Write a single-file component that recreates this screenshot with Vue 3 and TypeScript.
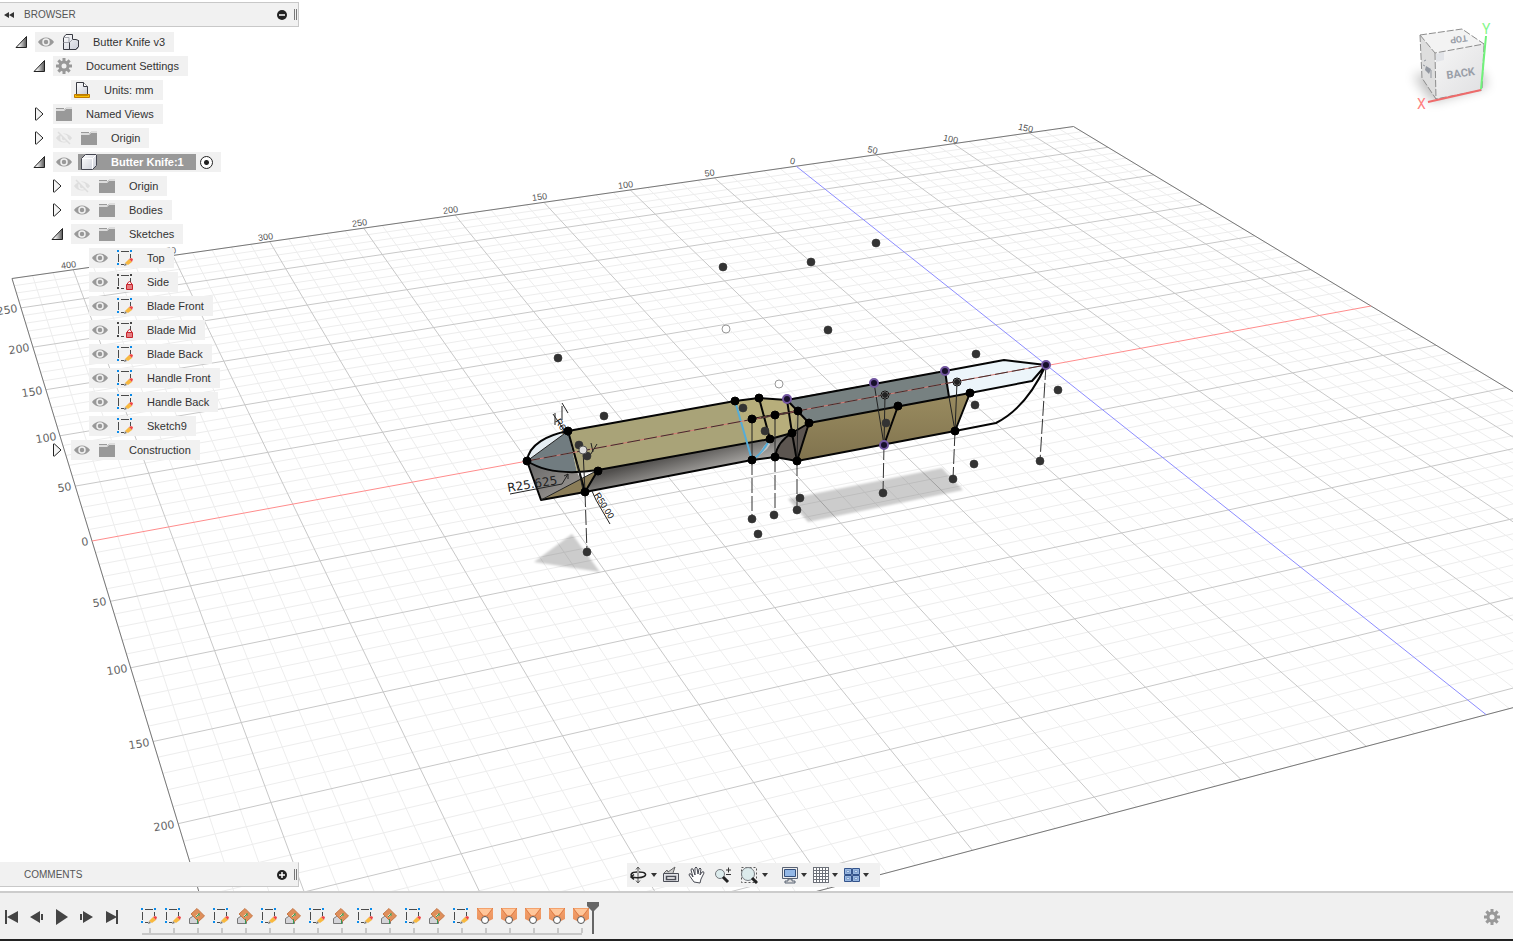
<script setup lang="ts">
import { ref } from 'vue'

type IconKind = 'assembly' | 'gear' | 'units' | 'folder' | 'body' | 'sketch' | 'locked'
type Fold = 'open' | 'closed' | 'none'
interface TreeRow {
  label: string
  level: number
  fold: Fold
  eye: 'on' | 'off' | 'none'
  icon: IconKind
  active?: boolean
}

const row = (label: string, level: number, fold: Fold, eye: TreeRow['eye'], icon: IconKind, active = false): TreeRow =>
  ({ label, level, fold, eye, icon, active })

const rows: TreeRow[] = [
  row('Butter Knife v3', 0, 'open', 'on', 'assembly'),
  row('Document Settings', 1, 'open', 'none', 'gear'),
  row('Units: mm', 2, 'none', 'none', 'units'),
  row('Named Views', 1, 'closed', 'none', 'folder'),
  row('Origin', 1, 'closed', 'off', 'folder'),
  row('Butter Knife:1', 1, 'open', 'on', 'body', true),
  row('Origin', 2, 'closed', 'off', 'folder'),
  row('Bodies', 2, 'closed', 'on', 'folder'),
  row('Sketches', 2, 'open', 'on', 'folder'),
  row('Top', 3, 'none', 'on', 'sketch'),
  row('Side', 3, 'none', 'on', 'locked'),
  row('Blade Front', 3, 'none', 'on', 'sketch'),
  row('Blade Mid', 3, 'none', 'on', 'locked'),
  row('Blade Back', 3, 'none', 'on', 'sketch'),
  row('Handle Front', 3, 'none', 'on', 'sketch'),
  row('Handle Back', 3, 'none', 'on', 'sketch'),
  row('Sketch9', 3, 'none', 'on', 'sketch'),
  row('Construction', 2, 'closed', 'on', 'folder'),
]

const activeComponent = ref('Butter Knife:1')

const features = [
  'sketch', 'sketch', 'loft', 'sketch', 'loft', 'sketch', 'loft', 'sketch', 'loft', 'sketch',
  'loft', 'sketch', 'loft', 'sketch', 'patch', 'patch', 'patch', 'patch', 'patch',
]

const transport = [
  { name: 'Go to start', d: 'M2 2h2v14H2zM15 3v12L4 9z' },
  { name: 'Step back', d: 'M12 3v12L2 9zM13 6h2v6h-2z' },
  { name: 'Play', d: 'M3 1l12 8-12 8z' },
  { name: 'Step forward', d: 'M2 6h2v6H2zM5 3l10 6-10 6z' },
  { name: 'Go to end', d: 'M3 3l11 6-11 6zM13 2h2v14h-2z' },
]

const tools = [
  { name: 'Orbit', icon: 'orbit', menu: true },
  { name: 'Look at', icon: 'look', menu: false },
  { name: 'Pan', icon: 'pan', menu: false },
  { name: 'Zoom', icon: 'zoom', menu: false },
  { name: 'Fit', icon: 'fit', menu: true },
  { name: 'Display settings', icon: 'display', menu: true },
  { name: 'Grid and snaps', icon: 'grid', menu: true },
  { name: 'Viewports', icon: 'views', menu: true },
]

/* Ground plane, in millimetres, seen through a perspective camera. */
const U0 = -430
const U1 = 180
const W0 = -290
const W1 = 310

function project(u: number, w: number): [number, number] {
  const s = (u - U0) / 610
  const t = (w - W0) / 290
  const k = 1 + 0.18379 * s - 0.21281 * t
  return [
    Math.round((1258.8 * s + 60.42 * t + 12) / k * 10) / 10,
    Math.round((-128.75 * s + 147.37 * t + 278.5) / k * 10) / 10,
  ]
}

function line(a: [number, number], b: [number, number]): string {
  return `M${a.join(' ')}L${b.join(' ')}`
}

let minor = ''
let major = ''
for (let u = U0; u <= U1; u += 10) {
  if (u === 0) continue
  const d = line(project(u, W0), project(u, W1))
  if (u % 50 === 0) major += d
  else minor += d
}
for (let w = W0; w <= W1; w += 10) {
  if (w === 0) continue
  const d = line(project(U0, w), project(U1, w))
  if (w % 50 === 0) major += d
  else minor += d
}
const border = line(project(U0, W0), project(U1, W0)) + line(project(U0, W0), project(U0, W1))
  + line(project(U1, W0), project(U1, W1)) + line(project(U0, W1), project(U1, W1))
const redAxis = line(project(U0, 0), project(U1, 0))
const blueAxis = line(project(0, W0), project(0, W1))

const topMarks = [-400, -350, -300, -250, -200, -150, -100, -50, 0, 50, 100, 150].map((u) => {
  const [x, y] = project(u, W0)
  return { text: String(Math.abs(u)), place: `translate(${Math.round(x) - 4} ${Math.round(y) - 2}) rotate(${u < 0 ? -8 : 12})` }
})
const sideMarks = [-250, -200, -150, -100, -50, 0, 50, 100, 150, 200].map((w) => {
  const [x, y] = project(U0, w)
  return { text: String(Math.abs(w)), place: `translate(${Math.round(x) - 3} ${Math.round(y) + 4}) rotate(-9)` }
})

const looseDots = [
  [558, 358], [604, 416], [723, 267], [811, 262], [876, 243], [828, 330], [976, 354], [1058, 390],
  [975, 405], [974, 464], [800, 498], [758, 534], [743, 408], [765, 431], [886, 423], [579, 445],
  [587, 456], [587, 552], [752, 519], [774, 515], [797, 510], [883, 493], [953, 479], [1040, 461],
]
const fixedDots = [
  [527, 461], [568, 431], [598, 471], [585, 492], [735, 401], [759, 398], [752, 419], [775, 415],
  [798, 411], [809, 423], [792, 433], [770, 439], [752, 460], [775, 457], [797, 461], [898, 406],
  [970, 393], [955, 431],
]
const rimmedDots = [[787, 399], [874, 383], [945, 371], [884, 445], [1046, 365]]
const rings = [[726, 329], [779, 384]]
const targets = [[885, 395], [957, 382]]
</script>

<template>
  <div class="app">
    <svg class="defs" aria-hidden="true">
      <defs>
        <linearGradient id="fold" x1="0" y1="0" x2="1" y2="0">
          <stop offset="0.3" stop-color="#eee" /><stop offset="1" stop-color="#555" />
        </linearGradient>
        <linearGradient id="metal" x1="0" y1="0" x2="1" y2="1">
          <stop offset="0" stop-color="#fff" /><stop offset="1" stop-color="#c9ccd6" />
        </linearGradient>
        <linearGradient id="peach" x1="0" y1="0" x2="0" y2="1">
          <stop offset="0" stop-color="#f4a26d" /><stop offset="1" stop-color="#e9905c" />
        </linearGradient>
        <symbol id="i-eye" viewBox="0 0 16 16">
          <path d="M0 8C4 2 12 2 16 8C12 14 4 14 0 8z" fill="#999" />
          <circle cx="8" cy="8" r="3" fill="#999" stroke="#f1f1f1" stroke-width="1.5" />
        </symbol>
        <symbol id="i-eye-off" viewBox="0 0 16 16">
          <path d="M0 8C4 2 12 2 16 8C12 14 4 14 0 8z" fill="#dedede" />
          <circle cx="8" cy="8" r="3" fill="#dedede" stroke="#f1f1f1" stroke-width="1.5" />
          <path d="M3 1l12 13" stroke="#f1f1f1" stroke-width="3" /><path d="M2 2l12 12" stroke="#dedede" stroke-width="1.5" />
        </symbol>
        <symbol id="i-assembly" viewBox="0 0 16 16">
          <path d="M.5 3.500L3 .5h6.500v5H13l2.500 1v6L13 15.500H.5z" fill="url(#metal)" stroke="#383a42" />
          <path d="M.5 8.500h6v7M6.500 8.500l3-3M.5 3.500h5.500v5" fill="none" stroke="#a3a5ad" />
          <path d="M6.500 8.500V15.500H13l2.500-3v-6" fill="none" stroke="#383a42" />
        </symbol>
        <symbol id="i-gear" viewBox="0 0 16 16">
          <g fill="#999">
            <circle cx="8" cy="8" r="5.500" />
            <path d="M6.500 0h3v16h-3z" />
            <path d="M6.500 0h3v16h-3z" transform="rotate(45 8 8)" />
            <path d="M6.500 0h3v16h-3z" transform="rotate(90 8 8)" />
            <path d="M6.500 0h3v16h-3z" transform="rotate(135 8 8)" />
          </g>
          <circle cx="8" cy="8" r="2.500" fill="#f1f1f1" />
        </symbol>
        <symbol id="i-units" viewBox="0 0 16 16">
          <path d="M2.500.5h7l4 4v8h-11z" fill="url(#metal)" stroke="#383a42" />
          <path d="M9.500.5v4h4" fill="#fff" stroke="#383a42" />
          <path d="M.5 12.500h15v3H.5z" fill="#fac000" stroke="#c07a00" />
          <path d="M3 13v1M5 13v1M7 13v1M9 13v1M11 13v1M13 13v1" stroke="#8a5200" />
        </symbol>
        <symbol id="i-folder" viewBox="0 0 16 16">
          <path d="M0 2h8v1H0zM0 5h8l2-2h6v12H0z" fill="#999" />
          <path d="M0 4h8l2-2h6" fill="none" stroke="#c9c9c9" />
        </symbol>
        <symbol id="i-body" viewBox="0 0 16 16">
          <path d="M.5 4.500l4-4h11v11l-4 4H.5z" fill="url(#metal)" stroke="#444650" />
          <path d="M1 4.500h10.500V15M11.500 4.500l4-4" fill="none" stroke="#fff" />
        </symbol>
        <symbol id="i-frame" viewBox="0 0 16 16">
          <path d="M4 1.500h8M1.500 4v8M13.500 4v4M4 14.500h3" fill="none" stroke="#4a4a4a" />
        </symbol>
        <symbol id="i-sketch" viewBox="0 0 16 16">
          <use href="#i-frame" />
          <path d="M0 0h2v2H0zM13 0h2v2h-2zM0 13h2v2H0z" fill="#0b8bea" />
          <path d="M7 16l1-3 2 2z" fill="#777" />
          <path d="M8 13l4-4 3 3-4 3z" fill="#f8b83f" />
          <path d="M12 9l2-1 2 1-1 3z" fill="#f04444" />
        </symbol>
        <symbol id="i-locked" viewBox="0 0 16 16">
          <use href="#i-frame" />
          <path d="M0 0h2v2H0zM13 0h2v2h-2zM0 13h2v2H0z" fill="#444" />
          <path d="M8 8h8v8H8z" fill="#f1f1f1" />
          <path d="M10.500 11V9q2-3 4 0v2" fill="none" stroke="#c8232c" />
          <path d="M9.500 10.500h6v5h-6z" fill="#e57d80" stroke="#c8232c" />
        </symbol>
        <symbol id="i-loft" viewBox="0 0 16 16">
          <path d="M.5 10.500l3-2h6v7h-9z" fill="#d4d4d8" stroke="#777" />
          <path d="M8 .5L15.500 8 9.500 13.500 2 6z" fill="#df8f5b" stroke="#c57848" />
          <path d="M6.500 8l3-2.500 1 1.500-3 2z" fill="#e9f4e3" /><path d="M7 9l3-3M10 5v3M8.500 11v5" stroke="#3a9a55" fill="none" />
        </symbol>
        <symbol id="i-patch" viewBox="0 0 16 16">
          <path d="M0 0h16v11l-6 3H6l-6-3z" fill="url(#peach)" />
          <path d="M1 1h14L10 7H6z" fill="#ffc69a" />
          <path d="M0 0l6 8M16 0l-6 8" stroke="#dc7c47" />
          <circle cx="8" cy="12" r="3.500" fill="#fff" stroke="#555" />
        </symbol>
        <symbol id="i-orbit" viewBox="0 0 18 18">
          <path d="M9 1v16M7 3.500L9 1l2 2.500M7 14.500L9 17l2-2.500" fill="none" stroke="#555" />
          <path d="M8 6C2 6 1 9 3 10.500M10 6c7 0 8 3 5 4.500C12 12 6 12 3 11M5 8.500l-3 2.500 3 2.500" fill="none" stroke="#222" stroke-width="1.500" />
        </symbol>
        <symbol id="i-look" viewBox="0 0 18 18">
          <path d="M2 7l3-3 1 2 7-5-2 6" fill="#ccc" stroke="#666" />
          <path d="M1.500 7.500h15v8h-15z" fill="#e1e2e6" stroke="#4b4e57" /><path d="M4.500 10.500h9v3h-9z" fill="#fff" stroke="#4b4e57" stroke-width="1.500" />
        </symbol>
        <symbol id="i-pan" viewBox="0 0 18 18">
          <path d="M6 16L1 9q0-2 2-1l2 3-2-7q0-2 2-1l2 6V2q1-2 2 0l1 6 1-5q1-2 2 0l-1 6 2-3q2-1 2 1l-3 6-1 4z" fill="#fff" stroke="#494b54" />
        </symbol>
        <symbol id="i-zoom" viewBox="0 0 18 18">
          <circle cx="6" cy="8" r="4.500" fill="#dcebec" stroke="#73777c" />
          <path d="M9 11l5 5" stroke="#222" stroke-width="3" /><path d="M12 4h5M14.500 1.500v5M12 8.500h5" stroke="#333" />
        </symbol>
        <symbol id="i-fit" viewBox="0 0 18 18">
          <path d="M1.500 1.500h15v15h-15z" fill="none" stroke="#555" stroke-dasharray="2 2" />
          <circle cx="8" cy="8" r="6.500" fill="#dcebec" stroke="#777b80" /><path d="M12 12l5 5" stroke="#222" stroke-width="3" />
        </symbol>
        <symbol id="i-display" viewBox="0 0 18 18">
          <path d="M1.500 1.500h15v11h-15z" fill="#eee" stroke="#596273" /><path d="M3.500 3.500h11v7h-11z" fill="#94b8e6" stroke="#35507c" />
          <path d="M7 13h4v2h3v2H4v-2h3z" fill="#ddd" stroke="#596273" />
        </symbol>
        <symbol id="i-grid" viewBox="0 0 18 18">
          <path d="M1.500 1.500h15v15h-15z" fill="#fff" />
          <path d="M1.500 1v16M4.500 1v16M7.500 1v16M10.500 1v16M13.500 1v16M16.500 1v16M1 1.500h16M1 4.500h16M1 7.500h16M1 10.500h16M1 13.500h16M1 16.500h16" stroke="#6d7179" />
        </symbol>
        <symbol id="i-views" viewBox="0 0 18 18">
          <path d="M1.500 2.500h7v6h-7zM9.500 2.500h7v6h-7zM1.500 9.500h7v6h-7zM9.500 9.500h7v6h-7z" fill="#98b7e0" stroke="#34548c" />
          <path d="M3.500 4.500h3v2h-3zM11.500 4.500h3v2h-3zM3.500 11.500h3v2h-3zM11.500 11.500h3v2h-3z" fill="#c8dbf2" stroke="#7f9fcc" />
        </symbol>
      </defs>
    </svg>

    <main class="workspace">
      <svg class="scene" viewBox="0 0 1513 891" preserveAspectRatio="xMidYMin slice" role="img" aria-label="Butter knife model">
        <defs>
          <linearGradient id="under" gradientUnits="userSpaceOnUse" x1="670" y1="455" x2="677" y2="481">
            <stop offset="0" stop-color="#514f4d" /><stop offset="1" stop-color="#aaa8a5" />
          </linearGradient>
          <linearGradient id="tip" x1="0" y1="0" x2="1" y2="1">
            <stop offset="0" stop-color="#666" /><stop offset="1" stop-color="#a29d99" />
          </linearGradient>
          <linearGradient id="blade" x1="0" y1="0" x2="0" y2="1">
            <stop offset="0" stop-color="#9a8c60" /><stop offset="1" stop-color="#80734e" />
          </linearGradient>
          <linearGradient id="cubeface" x1="0" y1="0" x2="1" y2="1">
            <stop offset="0" stop-color="#f6f6f6" /><stop offset="1" stop-color="#dfdfe1" />
          </linearGradient>
          <filter id="soft" x="-50%" y="-50%" width="200%" height="200%"><feGaussianBlur stdDeviation="6" /></filter>
          <filter id="edge" x="-10%" y="-10%" width="120%" height="120%"><feGaussianBlur stdDeviation="1" /></filter>
        </defs>

        <path class="minor" :d="minor" />
        <path class="major" :d="major" />
        <path class="border" :d="border" />
        <path class="red-axis" :d="redAxis" />
        <path class="blue-axis" :d="blueAxis" />
        <text v-for="(m, i) in topMarks" :key="'t' + i" class="mark-top" :transform="m.place">{{ m.text }}</text>
        <text v-for="(m, i) in sideMarks" :key="'s' + i" class="mark-side" :transform="m.place">{{ m.text }}</text>

        <g fill="#000" fill-opacity="0.200" filter="url(#edge)">
          <path d="M572 534L600 572L534 562z" /><path d="M942 468L963 490L808 522L788 499z" />
        </g>

        <path d="M527 461C529 444 548 435 568 431z" fill="#e6eef3" />
        <path d="M527 461L568 431L577 472Q548 474 527 461z" fill="#717c80" />
        <path d="M527 461Q550 474 577 472L581 480L541 500z" fill="url(#tip)" />
        <path d="M541 500L598 470L585 492z" fill="#8b7d58" />
        <path d="M568 431L735 401L759 398L787 400L798 411L809 423L792 433L770 439L598 470L577 472z" fill="#a9a378" />
        <path d="M735 401L759 398L787 400L798 411L792 433L770 439L747 443z" fill="#b7ae7b" />
        <path d="M598 470L770 439L792 433L809 423L797 461L775 457L752 460L585 492z" fill="url(#under)" />
        <path d="M775 457Q778 442 792 433L809 423L797 461z" fill="#5c5550" />
        <path d="M787 399L945 371L949 397L809 423L798 411z" fill="#778181" />
        <path d="M945 371L1004 360L1046 365L1032 381L949 397z" fill="#ecf5fa" />
        <path d="M809 423L970 393L955 431L797 461z" fill="url(#blade)" />
        <path d="M764 446L777 434L767 449L757 457z" fill="#ddd" opacity="0.700" />

        <g class="ink">
          <path d="M527 461C529 444 548 435 568 431L735 401L759 398L787 400L945 371L1004 360L1046 365L1032 381L949 397L809 423L792 433L770 439L598 470Q552 477 527 461L541 500L585 492L752 460L775 457L797 461L955 431L996 423Q1026 408 1046 365" />
          <path d="M568 431L585 492L598 470M759 398L770 439M787 400L792 433L797 461L809 423M787 400L809 423M775 457Q777 442 792 433M752 419L798 411M898 406L884 445M945 371L949 397M955 431L970 393" />
        </g>
        <path d="M527 461L568 431M541 500L598 470M798 411L797 461M885 395L884 445M874 383L884 445M949 397L955 431M957 382L955 431M752 419V460M775 415V457M583 450L585 492" class="thin" />
        <path d="M735 401L752 460Q762 454 770 439" class="selected" />
        <path d="M527 461L1046 365" class="center-red" />
        <path d="M527 461L1046 365" class="center" />
        <path d="M585 492L587 552M752 460V519M775 457V515M797 461V510M884 445L883 493M955 431L953 479M1046 365L1040 461" class="drop" />

        <g class="dimension">
          <path d="M510 494L562 484L568 474M564 476l4-2v5" />
          <path d="M553 414l15 22M555 413v12M562 420V406M562 403l6 10M592 491l4 9 14 24M577 462l6 28M589 457l8-13M591 443l2 9" />
          <text transform="translate(508 492) rotate(-9)" class="radius">R25.625</text>
          <text transform="translate(555 421) rotate(58)" class="radius-small">R60</text>
          <text transform="translate(594 495) rotate(58)" class="radius-small">R50.00</text>
        </g>

        <circle v-for="(p, i) in looseDots" :key="'l' + i" :cx="p[0]" :cy="p[1]" r="4" class="loose" />
        <circle v-for="(p, i) in rimmedDots" :key="'r' + i" :cx="p[0]" :cy="p[1]" r="4" class="rimmed" />
        <circle v-for="(p, i) in fixedDots" :key="'f' + i" :cx="p[0]" :cy="p[1]" r="4" class="fixed" />
        <circle v-for="(p, i) in rings" :key="'o' + i" :cx="p[0]" :cy="p[1]" r="4" class="ring" />
        <g v-for="(p, i) in targets" :key="'g' + i">
          <circle :cx="p[0]" :cy="p[1]" r="4" fill="#bbb" stroke="#111" /><circle :cx="p[0]" :cy="p[1]" r="3" fill="#222" />
        </g>
        <circle cx="583" cy="450" r="4" fill="#ddd" stroke="#555" />
      </svg>

      <svg class="view-cube" viewBox="0 0 100 110" role="img" aria-label="View cube">
        <path d="M13 65L32 92L88 76L80 60z" fill="#000" opacity="0.250" filter="url(#soft)" />
        <path d="M20 25L62 19L84 34L35 43z" fill="#f3f3f3" />
        <path d="M20 25L35 43L36 89L22 68z" fill="#dedede" />
        <path d="M35 43L84 34L82 80L36 89z" fill="url(#cubeface)" />
        <path d="M36 44L44 42L44 50L36 52z" fill="#e2e4e8" />
        <path d="M20 25L62 19L84 34L35 43zM20 25L22 68L36 89L82 80L84 34M35 43L36 89" class="cube-edge" />
        <path d="M26 56l5 3-2 5-4-4z" fill="#9297a0" />
        <path d="M24 51l2-1M23 55l2 1M31 60v8" fill="none" stroke="#9297a0" />
        <text class="cube-text" transform="translate(47 69) rotate(-8)">BACK</text>
        <text class="cube-text cube-top" transform="translate(67 25) rotate(172)">TOP</text>
        <path d="M86 26L81 79" stroke="#71f27b" stroke-width="2" />
        <path d="M28 92L81 80" stroke="#ee6b6b" stroke-width="2" />
        <text class="axis-y" x="82" y="24">Y</text>
        <text class="axis-x" x="17" y="99">X</text>
      </svg>

      <aside class="side">
        <section class="browser">
          <header class="panel-head">
            <button type="button" class="collapse" aria-label="Collapse browser">
              <svg width="10" height="8" viewBox="0 0 10 8"><path d="M5 1v6L0 4zM10 1v6L5 4z" fill="#333" /></svg>
            </button>
            <h2>BROWSER</h2>
            <button type="button" class="round" aria-label="Close browser">
              <svg width="10" height="10" viewBox="0 0 10 10"><circle cx="5" cy="5" r="5" fill="#222" /><path d="M2 5h6" stroke="#fff" stroke-width="1.500" /></svg>
            </button>
            <i class="grip"></i>
          </header>
          <ul class="tree">
            <li v-for="(r, i) in rows" :key="i" class="tree-row" :class="'level-' + r.level">
              <button v-if="r.fold !== 'none'" type="button" class="fold" :aria-label="'Toggle ' + r.label" :aria-expanded="r.fold === 'open'">
                <svg v-if="r.fold === 'open'" width="12" height="12" viewBox="0 0 12 12"><path d="M11.500.5v11H1z" fill="url(#fold)" stroke="#222" /></svg>
                <svg v-else width="12" height="14" viewBox="0 0 12 14"><path d="M2.500 1h1L10 7l-6.500 6h-1z" fill="#f4f4f4" stroke="#222" /></svg>
              </button>
              <span v-else class="fold"></span>
              <div class="chip">
                <button v-if="r.eye !== 'none'" type="button" class="eye" :aria-label="'Visibility of ' + r.label">
                  <svg width="16" height="16"><use :href="r.eye === 'on' ? '#i-eye' : '#i-eye-off'" /></svg>
                </button>
                <span class="name" :class="{ active: r.active }">
                  <svg width="16" height="16"><use :href="'#i-' + r.icon" /></svg>
                  <span>{{ r.label }}</span>
                </span>
                <input v-if="r.active" v-model="activeComponent" type="radio" name="component" :value="r.label" :aria-label="'Activate ' + r.label" />
              </div>
            </li>
          </ul>
        </section>
        <header class="panel-head comments">
          <span class="collapse"></span>
          <h2>COMMENTS</h2>
          <button type="button" class="round" aria-label="Open comments">
            <svg width="10" height="10" viewBox="0 0 10 10"><circle cx="5" cy="5" r="5" fill="#222" /><path d="M2 5h6M5 2v6" stroke="#fff" stroke-width="1.500" /></svg>
          </button>
          <i class="grip"></i>
        </header>
      </aside>

      <nav class="tools" aria-label="Navigation">
        <button v-for="t in tools" :key="t.icon" type="button" class="tool" :class="t.icon" :aria-label="t.name">
          <svg width="18" height="18"><use :href="'#i-' + t.icon" /></svg>
          <svg v-if="t.menu" class="caret" width="6" height="4" viewBox="0 0 6 4"><path d="M0 0h6L3 4z" fill="#333" /></svg>
        </button>
      </nav>
    </main>

    <footer class="timeline">
      <div class="transport">
        <button v-for="t in transport" :key="t.name" type="button" :aria-label="t.name">
          <svg width="17" height="18" viewBox="0 0 17 18"><path :d="t.d" fill="#444" /></svg>
        </button>
      </div>
      <ol class="features">
        <li v-for="(f, i) in features" :key="i">
          <button type="button" :aria-label="f + ' ' + (i + 1)"><svg width="16" height="16"><use :href="'#i-' + f" /></svg></button>
        </li>
      </ol>
      <svg class="marker" width="12" height="32" viewBox="0 0 12 32"><path d="M0 0h12v4L7 9v23H5V9L0 4z" fill="#666" /></svg>
      <button type="button" class="settings" aria-label="Timeline settings"><svg width="16" height="16"><use href="#i-gear" /></svg></button>
    </footer>
  </div>
</template>

<style>
html,
body {
  margin: 0;
  background: #fff;
}
</style>

<style scoped>
.app {
  display: flex;
  flex-direction: column;
  height: 100vh;
  overflow: hidden;
  font-family: "Liberation Sans", Arial, sans-serif;
  font-size: 11px;
  color: #333;
}
.defs { position: absolute; width: 0; height: 0; }
button { border: 0; padding: 0; margin: 0; background: none; display: flex; align-items: center; justify-content: center; }
svg { display: block; }

.workspace { position: relative; flex: 1; min-height: 0; display: flex; }
.scene { position: absolute; inset: 0; width: 100%; height: 100%; }
.minor { stroke: #ededed; fill: none; }
.major { stroke: #c8c8c8; fill: none; }
.border { stroke: #777; fill: none; }
.red-axis { stroke: #ff8c8c; fill: none; }
.blue-axis { stroke: #8c8cff; fill: none; }
.mark-top { font: 9px "Liberation Sans", sans-serif; text-anchor: middle; fill: #555; }
.mark-side { font: 11px "DejaVu Sans", sans-serif; text-anchor: end; fill: #666; }
.ink { fill: none; stroke: #050505; stroke-width: 2; stroke-linejoin: round; }
.thin { fill: none; stroke: #222; stroke-width: 1; }
.selected { fill: none; stroke: #55acd8; stroke-width: 2; }
.center-red { stroke: #d77b74; }
.center { stroke: #3f2c2c; stroke-dasharray: 13 4; }
.drop { fill: none; stroke: #333; stroke-width: 1; stroke-dasharray: 15 3; }
.dimension path { fill: none; stroke: #222; stroke-width: 1; }
.radius { font: 12px "DejaVu Sans", sans-serif; fill: #222; }
.radius-small { font: 9px "Liberation Sans", sans-serif; fill: #111; }
.loose { fill: #333; stroke: #333; stroke-opacity: 0.6; }
.fixed { fill: #000; stroke: #000; }
.rimmed { fill: #17102a; stroke: #7256a0; stroke-width: 2; }
.ring { fill: #fff; stroke: #999; }

.view-cube { position: absolute; top: 10px; right: 20px; width: 100px; height: 110px; overflow: visible; }
.view-cube { right: 13px; }
.cube-edge { fill: none; stroke: #8d8d8d; stroke-dasharray: 7 2; }
.cube-text { font: bold 11px Roboto, sans-serif; fill: #9a9fa8; }
.cube-top { font-size: 9px; }
.axis-x, .axis-y { font: 14px Roboto, sans-serif; }
.axis-x { fill: #ff8080; }
.axis-y { fill: #85f78c; }

.side { position: relative; width: 299px; padding: 2px 0 4px; display: flex; flex-direction: column; justify-content: space-between; }
.panel-head {
  box-sizing: border-box;
  height: 25px;
  display: flex;
  align-items: center;
  background: #f1f1f1;
  border: 1px solid #c8c8c8;
  border-left: 0;
}
.panel-head h2 { flex: 1; margin: 0; font: 10px/16px "Liberation Sans", Arial, sans-serif; color: #555; }
.panel-head.comments { border-top-color: #f1f1f1; }
.collapse { width: 24px; height: 20px; justify-content: flex-start; padding-left: 4px; box-sizing: border-box; }
.round { width: 10px; height: 20px; margin-right: 7px; }
.grip { width: 1px; height: 11px; border: 1px solid #777; border-width: 0 1px; margin-right: 1px; }
.tree { list-style: none; margin: 3px 0 0; padding: 0; }
.tree-row { height: 24px; display: flex; align-items: center; padding-left: 15px; }
.level-1 { padding-left: 33px; }
.level-2 { padding-left: 51px; }
.level-3 { padding-left: 69px; }
.fold { width: 12px; height: 20px; margin-right: 8px; flex: none; }
.chip { height: 20px; padding: 0 9px 0 3px; display: flex; align-items: center; background: #f1f1f1; white-space: nowrap; }
.eye { width: 16px; margin-right: 9px; }
.name { display: flex; align-items: center; gap: 14px; height: 16px; line-height: 16px; }
.name.active { background: #999; color: #fff; font-weight: bold; margin-left: -3px; padding: 0 12px 0 3px; }
.chip input {
  appearance: none;
  width: 13px;
  height: 13px;
  margin: 0 -1px 0 4px;
  border: 1px solid #222;
  border-radius: 50%;
  background: radial-gradient(circle, #222 2px, #fff 3px);
}

.tools {
  position: absolute;
  left: 627px;
  bottom: 4px;
  height: 24px;
  padding: 0 11px 0 2px;
  display: flex;
  align-items: center;
  gap: 8px;
  background: #f1f1f1;
}
.tool { gap: 2px; }
.tool.orbit { gap: 4px; margin-right: -3px; }
.tool.fit { gap: 4px; margin-right: 5px; }
.tool.display, .tool.grid { margin-right: -3px; }

.timeline {
  box-sizing: border-box;
  height: 50px;
  flex: none;
  display: flex;
  align-items: flex-start;
  background: #f0f0f0;
  border-top: 2px solid #ccc;
  border-bottom: 2px solid #222;
}
.transport { display: flex; width: 137px; padding: 15px 0 0 3px; gap: 8px; box-sizing: border-box; }
.features { position: relative; list-style: none; display: flex; margin: 0; padding: 15px 0 0; height: 27px; }
.features::after { content: ""; position: absolute; left: 5px; right: 11px; bottom: 0; height: 2px; background: #c8c8c8; }
.features li { position: relative; width: 24px; }
.features button { width: 24px; height: 16px; }
.features li::after { content: ""; position: absolute; left: 12px; bottom: 2px; width: 2px; height: 5px; background: #c8c8c8; }
.marker { margin: 9px 0 0 -6px; }
.settings { margin: 16px 13px 0 auto; }
</style>
